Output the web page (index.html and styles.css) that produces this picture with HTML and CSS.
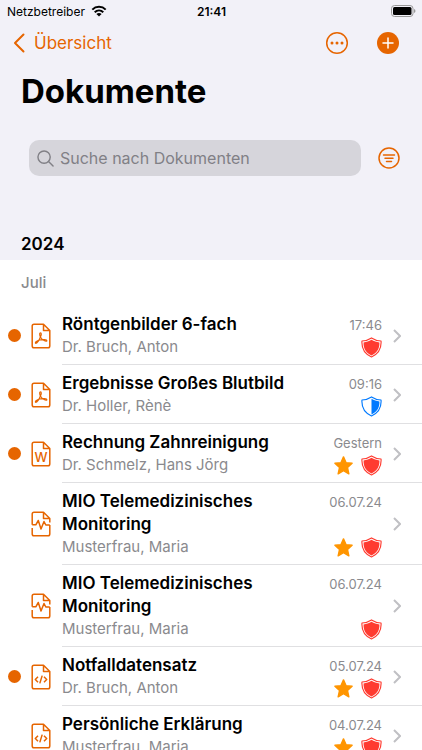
FILE: index.html
```
<!doctype html>
<html lang="de">
<head>
  <meta charset="utf-8">
  <meta name="viewport" content="width=device-width, initial-scale=1">
  <title>Dokumente</title>
  <link rel="stylesheet" href="styles.css">
</head>

<body>

  <!-- shared icons -->
  <svg class="sprite" aria-hidden="true">
    <symbol id="page" viewBox="0 0 20 26">
      <path d="M3 1.200H12.500L18.800 7.500V23Q18.800 24.800 17 24.800H3Q1.200 24.800 1.200 23V3Q1.200 1.200 3 1.200ZM12.500 1.200V7.500H18.800"/>
    </symbol>
    <symbol id="pdf" viewBox="0 0 20 26">
      <use href="#page"/>
      <path class="thin" d="M9.500 9.800C8.300 9.800 8.600 12.200 9.400 14C8.400 17 6 20.400 4.600 20.300C3.700 19.800 5.500 17.900 8.600 17C12 16.200 15.900 16.600 15.900 17.800C15 19 11.300 17.200 9.400 14C10.500 11.800 10.600 9.900 9.500 9.800Z"/>
    </symbol>
    <symbol id="word" viewBox="0 0 20 26">
      <use href="#page"/>
      <text x="10" y="21" text-anchor="middle">W</text>
    </symbol>
    <symbol id="pulse" viewBox="0 0 20 26">
      <path d="M1.200 13.800V3Q1.200 1.200 3 1.200H12.500L18.800 7.500V11.500M12.500 1.200V7.500H18.800M1.200 17V23Q1.200 24.800 3 24.800H17Q18.800 24.800 18.800 23V14"/>
      <path d="M1.200 13.800H4.800L7.300 9.500L10 18L13 10.500L14.800 14H18.800"/>
    </symbol>
    <symbol id="code" viewBox="0 0 20 26">
      <use href="#page"/>
      <path d="M7 12.800L4.300 15.500L7 18.200M13 12.800L15.700 15.500L13 18.200M11.200 11.600L8.800 19.400"/>
    </symbol>
    <symbol id="shield" viewBox="0 0 22 22">
      <path class="rim" d="M11 1C14 3 17.500 4 21 4.200C21.500 11.500 19 17.500 11 21C3 17.500 0.500 11.500 1 4.200C4.500 4 8 3 11 1Z"/>
      <path class="core" d="M11 3C13.500 4.600 16.400 5.500 19.300 5.700C19.500 11.500 17.400 16.400 11 19.300C4.600 16.400 2.500 11.500 2.700 5.700C5.600 5.500 8.500 4.600 11 3Z"/>
    </symbol>
    <symbol id="half-shield" viewBox="0 0 22 22">
      <path class="rim" d="M11 1C14 3 17.500 4 21 4.200C21.500 11.500 19 17.500 11 21C3 17.500 0.500 11.500 1 4.200C4.500 4 8 3 11 1Z"/>
      <path class="core" d="M11 3C13.500 4.600 16.400 5.500 19.300 5.700C19.500 11.500 17.400 16.400 11 19.300Z"/>
    </symbol>
    <symbol id="star" viewBox="0 0 22 22">
      <path d="M11 2L13.600 8L20 8.700L15.200 13.200L16.600 19.700L11 16.500L5.400 19.700L6.800 13.200L2 8.700L8.400 8Z"/>
    </symbol>
  </svg>

  <header class="top">
    <div class="statusbar">
      <div class="carrier">
        <span>Netzbetreiber</span>
        <svg class="wifi" viewBox="0 0 16 12" aria-hidden="true">
          <path d="M1.300 4.600C5 0.900 11 0.900 14.700 4.600M3.700 7.200C6.200 4.900 9.800 4.900 12.300 7.200"/>
          <path class="wifi-dot" d="M8 11.500L5.400 8.900Q8 7 10.600 8.900Z"/>
        </svg>
      </div>
      <span class="time">21:41</span>
      <svg class="battery" viewBox="0 0 25 12" aria-hidden="true">
        <rect class="shell" x="0.500" y="0.500" width="21.500" height="11" rx="3"/>
        <rect x="2" y="2" width="18.500" height="8" rx="1.500"/>
        <path class="cap" d="M23 4Q24.500 4.500 24.500 6T23 8Z"/>
      </svg>
    </div>

    <nav class="navbar">
      <a class="back" href="#">
        <svg viewBox="0 0 12 20" aria-hidden="true"><path d="M10.500 1.500L2 10L10.500 18.500"/></svg>
        Übersicht
      </a>
      <div class="actions">
        <button class="round" aria-label="Mehr">
          <svg viewBox="0 0 24 24" aria-hidden="true">
            <circle class="ring" cx="12" cy="12" r="10.300"/>
            <circle cx="7" cy="12" r="1.500"/><circle cx="12" cy="12" r="1.500"/><circle cx="17" cy="12" r="1.500"/>
          </svg>
        </button>
        <button class="round" aria-label="Hinzufügen">
          <svg viewBox="0 0 24 24" aria-hidden="true">
            <circle cx="12" cy="12" r="11"/>
            <path class="plus" d="M12 7V17M7 12H17"/>
          </svg>
        </button>
      </div>
    </nav>

    <h1>Dokumente</h1>

    <form class="search">
      <label class="field">
        <svg viewBox="0 0 18 18" aria-hidden="true"><circle cx="7.500" cy="7.500" r="6.500"/><path d="M12.200 12.200L17 17"/></svg>
        <input type="search" placeholder="Suche nach Dokumenten" aria-label="Suche nach Dokumenten">
      </label>
      <button class="round" type="button" aria-label="Filter">
        <svg viewBox="0 0 24 24" aria-hidden="true">
          <circle class="ring" cx="12" cy="12" r="10"/>
          <path class="lines" d="M6.500 9H17.500M8 12.200H16M9.500 15.500H14.500"/>
        </svg>
      </button>
    </form>

    <h2>2024</h2>
  </header>

  <main>
    <h3>Juli</h3>
    <ul class="documents">
      <li>
        <a class="row unread" href="#">
          <svg class="file"><use href="#pdf"/></svg>
          <div class="entry">
            <div class="info"><h4>Röntgenbilder 6-fach</h4><p>Dr. Bruch, Anton</p></div>
            <div class="meta">
              <time>17:46</time>
              <div class="badges"><svg class="red"><use href="#shield"/></svg></div>
            </div>
            <svg class="chevron" viewBox="0 0 8 14"><path d="M1 1L7 7L1 13"/></svg>
          </div>
        </a>
      </li>
      <li>
        <a class="row unread" href="#">
          <svg class="file"><use href="#pdf"/></svg>
          <div class="entry">
            <div class="info"><h4>Ergebnisse Großes Blutbild</h4><p>Dr. Holler, Rènè</p></div>
            <div class="meta">
              <time>09:16</time>
              <div class="badges"><svg class="blue"><use href="#half-shield"/></svg></div>
            </div>
            <svg class="chevron" viewBox="0 0 8 14"><path d="M1 1L7 7L1 13"/></svg>
          </div>
        </a>
      </li>
      <li>
        <a class="row unread" href="#">
          <svg class="file"><use href="#word"/></svg>
          <div class="entry">
            <div class="info"><h4>Rechnung Zahnreinigung</h4><p>Dr. Schmelz, Hans Jörg</p></div>
            <div class="meta">
              <time>Gestern</time>
              <div class="badges"><svg class="star"><use href="#star"/></svg><svg class="red"><use href="#shield"/></svg></div>
            </div>
            <svg class="chevron" viewBox="0 0 8 14"><path d="M1 1L7 7L1 13"/></svg>
          </div>
        </a>
      </li>
      <li>
        <a class="row" href="#">
          <svg class="file"><use href="#pulse"/></svg>
          <div class="entry">
            <div class="info"><h4>MIO Telemedizinisches Monitoring</h4><p>Musterfrau, Maria</p></div>
            <div class="meta">
              <time>06.07.24</time>
              <div class="badges"><svg class="star"><use href="#star"/></svg><svg class="red"><use href="#shield"/></svg></div>
            </div>
            <svg class="chevron" viewBox="0 0 8 14"><path d="M1 1L7 7L1 13"/></svg>
          </div>
        </a>
      </li>
      <li>
        <a class="row" href="#">
          <svg class="file"><use href="#pulse"/></svg>
          <div class="entry">
            <div class="info"><h4>MIO Telemedizinisches Monitoring</h4><p>Musterfrau, Maria</p></div>
            <div class="meta">
              <time>06.07.24</time>
              <div class="badges"><svg class="red"><use href="#shield"/></svg></div>
            </div>
            <svg class="chevron" viewBox="0 0 8 14"><path d="M1 1L7 7L1 13"/></svg>
          </div>
        </a>
      </li>
      <li>
        <a class="row unread" href="#">
          <svg class="file"><use href="#code"/></svg>
          <div class="entry">
            <div class="info"><h4>Notfalldatensatz</h4><p>Dr. Bruch, Anton</p></div>
            <div class="meta">
              <time>05.07.24</time>
              <div class="badges"><svg class="star"><use href="#star"/></svg><svg class="red"><use href="#shield"/></svg></div>
            </div>
            <svg class="chevron" viewBox="0 0 8 14"><path d="M1 1L7 7L1 13"/></svg>
          </div>
        </a>
      </li>
      <li>
        <a class="row" href="#">
          <svg class="file"><use href="#code"/></svg>
          <div class="entry">
            <div class="info"><h4>Persönliche Erklärung</h4><p>Musterfrau, Maria</p></div>
            <div class="meta">
              <time>04.07.24</time>
              <div class="badges"><svg class="star"><use href="#star"/></svg><svg class="red"><use href="#shield"/></svg></div>
            </div>
            <svg class="chevron" viewBox="0 0 8 14"><path d="M1 1L7 7L1 13"/></svg>
          </div>
        </a>
      </li>
    </ul>
  </main>

</body>
</html>
```
FILE: styles.css
```
* {
  box-sizing: border-box;
}
body {
  margin: 0;
  background: #fff;
  color: #000;
  font-family: Inter, "Liberation Sans", sans-serif;
  font-size: 16px;
}
h1, h2, h3, h4, p, ul {
  margin: 0;
  padding: 0;
}
svg {
  display: block;
  flex: none;
}
a {
  color: inherit;
  text-decoration: none;
}
.sprite {
  display: none;
}

/* header */
.top {
  background: #f2f1f8;
}
.statusbar {
  display: grid;
  grid-template-columns: 1fr auto 1fr;
  align-items: center;
  height: 22px;
  padding: 0 6px 0 7px;
  font-size: 12px;
}
.carrier {
  display: flex;
  align-items: center;
  gap: 6px;
}
.wifi {
  width: 16px;
  height: 12px;
  fill: none;
  stroke: #000;
  stroke-width: 2;
}
.wifi-dot {
  fill: #000;
  stroke: none;
}
.time {
  font-weight: 600;
}
.battery {
  width: 25px;
  height: 12px;
  justify-self: end;
}
.shell {
  fill: none;
  stroke: #999;
}
.cap {
  fill: #999;
}
.navbar {
  display: flex;
  align-items: center;
  justify-content: space-between;
  height: 42px;
  padding: 0 22px 0 13px;
}
.back {
  display: flex;
  align-items: center;
  gap: 9px;
  color: #e66500;
  font-size: 17px;
}
.back svg {
  width: 12px;
  height: 20px;
  fill: none;
  stroke: #e66500;
  stroke-width: 2;
  stroke-linecap: round;
  stroke-linejoin: round;
}
.actions {
  display: flex;
  gap: 27px;
}
.round {
  padding: 0;
  border: 0;
  background: none;
  cursor: pointer;
}
.round svg {
  width: 24px;
  height: 24px;
  fill: #e66500;
}
.round .ring,
.round .lines {
  fill: none;
  stroke: #e66500;
  stroke-width: 1.5;
  stroke-linecap: round;
}
.round .plus {
  stroke: #fff;
  stroke-width: 1.5;
  stroke-linecap: round;
}
h1 {
  padding: 6px 21px 0;
  font-size: 33px;
  line-height: 42px;
  font-weight: 700;
}
.search {
  display: flex;
  align-items: center;
  gap: 16px;
  padding: 28px 21px 0 29px;
}
.field {
  display: flex;
  flex: 1;
  align-items: center;
  gap: 6px;
  height: 36px;
  padding: 0 8px;
  border-radius: 10px;
  background: #d6d5db;
}
.field svg {
  width: 17px;
  height: 17px;
  fill: none;
  stroke: #818086;
  stroke-width: 1.5;
  stroke-linecap: round;
}
.field input {
  flex: 1;
  min-width: 0;
  padding: 0;
  border: 0;
  outline: none;
  background: none;
  font: inherit;
}
.field input::placeholder {
  color: #818086;
}
h2 {
  padding: 56px 21px 4px;
  font-size: 17px;
  line-height: 24px;
  font-weight: 600;
}

/* list */
h3 {
  padding: 11px 21px;
  color: #8a8a8e;
  font-size: 15px;
  line-height: 24px;
  font-weight: 500;
}
.documents {
  list-style: none;
}
.row {
  display: flex;
  align-items: center;
  padding-left: 8px;
}
.row::before {
  content: "";
  flex: none;
  width: 13px;
  height: 13px;
  margin-right: 10px;
  border-radius: 50%;
}
.unread::before {
  background: #e66500;
}
.file {
  width: 20px;
  height: 26px;
  margin-right: 11px;
  fill: none;
  stroke: #e66500;
  stroke-width: 1.5;
  stroke-linejoin: round;
}
.thin {
  stroke-width: 1.2;
}
.file text,
#word text {
  fill: #e66500;
  stroke: none;
  font-size: 13px;
  font-weight: 500;
}
.entry {
  display: flex;
  flex: 1;
  min-width: 0;
  align-items: center;
  padding: 7px 21px 6px 0;
  border-bottom: 1px solid #e0e0e2;
}
.info {
  flex: 1;
  min-width: 0;
}
h4 {
  font-size: 17px;
  line-height: 23px;
  font-weight: 600;
}
.info p {
  color: #8a8a8e;
  font-size: 15px;
  line-height: 22px;
}
.meta {
  display: flex;
  flex-direction: column;
  align-items: flex-end;
  align-self: stretch;
  justify-content: space-between;
  padding-top: 3px;
  color: #8a8a8e;
  font-size: 13px;
  line-height: 18px;
}
.badges {
  display: flex;
  gap: 7px;
}
.badges svg {
  width: 21px;
  height: 21px;
}
.red {
  color: #ff3b30;
}
.blue {
  color: #007aff;
}
.rim {
  fill: none;
  stroke: currentColor;
  stroke-width: 1.2;
  stroke-linejoin: round;
}
.core {
  fill: currentColor;
}
.badges .star {
  fill: #ff9500;
  stroke: #ff9500;
  stroke-width: 1.5;
  stroke-linejoin: round;
}
.chevron {
  width: 8px;
  height: 14px;
  margin-left: 11px;
  fill: none;
  stroke: #c0c0c4;
  stroke-width: 2;
}
```
